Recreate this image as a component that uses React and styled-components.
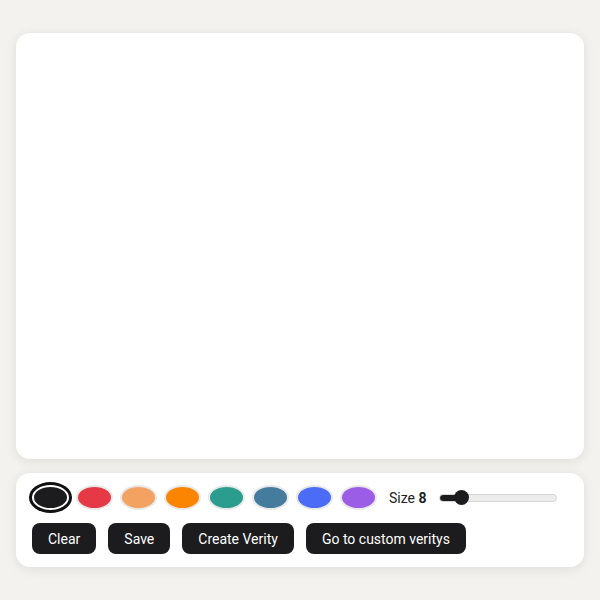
import React, { useState } from "react";
import styled, { createGlobalStyle } from "styled-components";

const colors = [
  "#1c1c1e",
  "#e63946",
  "#f4a261",
  "#fb8500",
  "#2a9d8f",
  "#457b9d",
  "#4a6cf7",
  "#9b5de5",
];

const buttons = ["Clear", "Save", "Create Verity", "Go to custom veritys"];

const App = () => {
  const [color, setColor] = useState(colors[0]);
  const [size, setSize] = useState(8);
  const pct = ((size - 1) / 49) * 100;

  return (
    <Page>
      <GlobalStyle />
      <Canvas />
      <Toolbar>
        <Row>
          {colors.map((c) => (
            <Swatch
              key={c}
              $color={c}
              $active={c === color}
              onClick={() => setColor(c)}
            />
          ))}
          <SizeLabel>
            Size <b>{size}</b>
          </SizeLabel>
          <Slider
            type="range"
            min={1}
            max={50}
            value={size}
            onChange={(e) => setSize(Number(e.target.value))}
            style={{
              background: `linear-gradient(to right, #1c1c1e ${pct}%, #ececec ${pct}%)`,
            }}
          />
        </Row>
        <Row>
          {buttons.map((b) => (
            <ActionBtn key={b}>{b}</ActionBtn>
          ))}
        </Row>
      </Toolbar>
    </Page>
  );
};

const GlobalStyle = createGlobalStyle`
  body {
    margin: 0;
    background: #f3f2ef;
    font-family: Roboto, "Liberation Sans", sans-serif;
  }
`;

const Page = styled.div`
  display: flex;
  flex-direction: column;
  gap: 14px;
  padding: 33px 16px;
`;

const Canvas = styled.div`
  height: 426px;
  background: #ffffff;
  border-radius: 14px;
  box-shadow: 0 2px 12px rgba(0, 0, 0, 0.09);
`;

const Toolbar = styled.div`
  display: flex;
  flex-direction: column;
  gap: 13px;
  padding: 12px 16px 13px;
  background: #ffffff;
  border-radius: 14px;
  box-shadow: 0 2px 12px rgba(0, 0, 0, 0.09);
`;

const Row = styled.div`
  display: flex;
  align-items: center;
  gap: 12px;
`;

const Swatch = styled.button`
  width: 37px;
  height: 25px;
  padding: 0;
  margin-right: -5px;
  border-radius: 50%;
  cursor: pointer;
  background: ${(p) => p.$color};
  border: 2px solid ${(p) => (p.$active ? "#ffffff" : "#e8e8e8")};
  box-shadow: ${(p) => (p.$active ? "0 0 0 3px #111111" : "none")};
  &:last-of-type {
    margin-right: 0;
  }
`;

const SizeLabel = styled.span`
  font-size: 14px;
  color: #222222;
  b {
    font-weight: 700;
  }
`;

const Slider = styled.input`
  -webkit-appearance: none;
  appearance: none;
  box-sizing: border-box;
  width: 118px;
  height: 8px;
  margin: 0;
  border-radius: 4px;
  border: 1px solid #d6d6d6;
  outline: none;
  &::-webkit-slider-thumb {
    -webkit-appearance: none;
    width: 15px;
    height: 15px;
    border-radius: 50%;
    background: #1c1c1e;
    cursor: pointer;
  }
`;

const ActionBtn = styled.button`
  height: 31px;
  padding: 0 16px;
  border: none;
  border-radius: 8px;
  background: #1c1c1e;
  color: #ffffff;
  font-family: Roboto, "Liberation Sans", sans-serif;
  font-size: 14px;
  cursor: pointer;
`;

export default App;
